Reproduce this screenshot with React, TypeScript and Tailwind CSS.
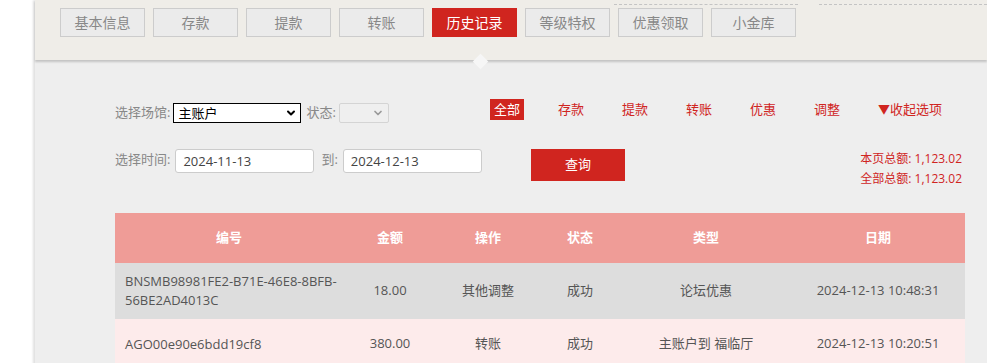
import { ChevronDown } from "lucide-react";

const tabs = ["基本信息", "存款", "提款", "转账", "历史记录", "等级特权", "优惠领取", "小金库"];
const filters = ["全部", "存款", "提款", "转账", "优惠", "调整"];

const rows = [
  {
    id: "BNSMB98981FE2-B71E-46E8-8BFB-56BE2AD4013C",
    amount: "18.00",
    op: "其他调整",
    status: "成功",
    type: "论坛优惠",
    date: "2024-12-13 10:48:31",
  },
  {
    id: "AGO00e90e6bdd19cf8",
    amount: "380.00",
    op: "转账",
    status: "成功",
    type: "主账户到 福临厅",
    date: "2024-12-13 10:20:51",
  },
  {
    id: "AGO00e90e6bd7a41c2",
    amount: "200.00",
    op: "转账",
    status: "成功",
    type: "福临厅到 主账户",
    date: "2024-12-13 09:58:12",
  },
];

export default function App() {
  return (
    <div className="min-h-screen overflow-hidden bg-white font-['Open_Sans','Noto_Sans_CJK_SC',sans-serif]">
      <div className="ml-[35px] bg-[#eeeeee] shadow-[-2px_0_2px_rgba(0,0,0,0.12)]">
        {/* top nav panel */}
        <div className="relative h-[60px] bg-[#efede8] shadow-[0_2px_2px_rgba(0,0,0,0.18)]">
          <div className="flex h-[5px]">
            <div className="ml-[579px] w-[184px] border-b border-dashed border-[#c4c4c4]" />
            <div className="ml-[21px] flex-1 border-b border-dashed border-[#c4c4c4]" />
          </div>
          <div className="mt-[3px] flex gap-[8px] pl-[25px]">
            {tabs.map((t, i) => (
              <div
                key={t}
                className={
                  i === 4
                    ? "flex h-[29px] w-[85px] items-center justify-center border border-[#d0251f] bg-[#d0251f] text-[14px] text-white"
                    : "flex h-[29px] w-[85px] items-center justify-center border border-[#cccccc] bg-[#ebebeb] text-[14px] text-[#888888]"
                }
              >
                {t}
              </div>
            ))}
          </div>
          <div className="absolute left-[440px] top-[56px] h-[11px] w-[11px] rotate-45 bg-[#f6f6f6]" />
        </div>

        {/* filters */}
        <div className="pl-[80px] pr-[22px] pt-[39px] text-[13px]">
          <div className="flex items-start">
            <div className="mt-[4px] flex w-[375px] items-center text-[#888888]">
              <span>选择场馆:</span>
              <div className="relative ml-[3px] h-[20px] w-[128px]">
                <select className="h-full w-full appearance-none border border-black bg-white pl-[4px] text-[13px] leading-[18px] text-black">
                  <option>主账户</option>
                </select>
                <ChevronDown
                  className="pointer-events-none absolute right-[4px] top-[4px] h-[12px] w-[12px] text-black"
                  strokeWidth={4}
                />
              </div>
              <span className="ml-[5px]">状态:</span>
              <div className="relative ml-[3px] h-[20px] w-[50px]">
                <select
                  disabled
                  className="h-full w-full appearance-none rounded-[2px] border border-[#d4d4d4] bg-[#efefef]"
                />
                <ChevronDown
                  className="pointer-events-none absolute right-[5px] top-[4px] h-[12px] w-[12px] text-[#9a9a9a]"
                  strokeWidth={3.5}
                />
              </div>
            </div>
            <div className="flex gap-[30px]">
              {filters.map((f, i) => (
                <span
                  key={f}
                  className={
                    i === 0
                      ? "bg-[#d0251f] px-[4px] leading-[20px] text-white"
                      : "px-[4px] leading-[20px] text-[#d0251f]"
                  }
                >
                  {f}
                </span>
              ))}
              <span className="px-[4px] leading-[20px] text-[#d0251f]">
                <span className="text-[12px]">▼</span>收起选项
              </span>
            </div>
          </div>

          <div className="mt-[26px] flex items-start">
            <div className="flex w-[375px] items-center text-[#888888]">
              <span className="-mt-[2px]">选择时间:</span>
              <input
                readOnly
                value="2024-11-13"
                className="ml-[5px] h-[24px] w-[139px] rounded-[3px] border border-[#cccccc] bg-white pl-[7px] text-[13px] text-[#444444]"
              />
              <span className="ml-[7px] -mt-[2px]">到:</span>
              <input
                readOnly
                value="2024-12-13"
                className="ml-[5px] h-[24px] w-[139px] rounded-[3px] border border-[#cccccc] bg-white pl-[7px] text-[13px] text-[#444444]"
              />
            </div>
            <button className="ml-[41px] h-[32px] w-[94px] bg-[#d0251f] text-[13px] text-white">
              查询
            </button>
            <div className="ml-auto mr-[3px] text-right text-[12px] leading-[20px] text-[#d0251f]">
              <div>本页总额: 1,123.02</div>
              <div>全部总额: 1,123.02</div>
            </div>
          </div>

          {/* table */}
          <table className="mt-[24px] w-full table-fixed border-collapse text-[13px]">
            <colgroup>
              <col className="w-[228px]" />
              <col className="w-[94px]" />
              <col className="w-[102px]" />
              <col className="w-[82px]" />
              <col className="w-[170px]" />
              <col className="w-[174px]" />
            </colgroup>
            <thead>
              <tr className="h-[50px] bg-[#ef9c97] font-bold text-white">
                <th>编号</th>
                <th>金额</th>
                <th>操作</th>
                <th>状态</th>
                <th>类型</th>
                <th>日期</th>
              </tr>
            </thead>
            <tbody className="text-[#555555]">
              {rows.map((r, i) => (
                <tr
                  key={r.id}
                  className={i % 2 === 0 ? "h-[50px] bg-[#dddddd]" : "h-[50px] bg-[#fdebeb]"}
                >
                  <td className="break-words py-[9px] pl-[10px] pr-[2px] text-left leading-[19px]">{r.id}</td>
                  <td className="text-center">{r.amount}</td>
                  <td className="text-center">{r.op}</td>
                  <td className="text-center">{r.status}</td>
                  <td className="text-center">{r.type}</td>
                  <td className="text-center">{r.date}</td>
                </tr>
              ))}
            </tbody>
          </table>
          <div className="h-[40px]" />
        </div>
      </div>
    </div>
  );
}
